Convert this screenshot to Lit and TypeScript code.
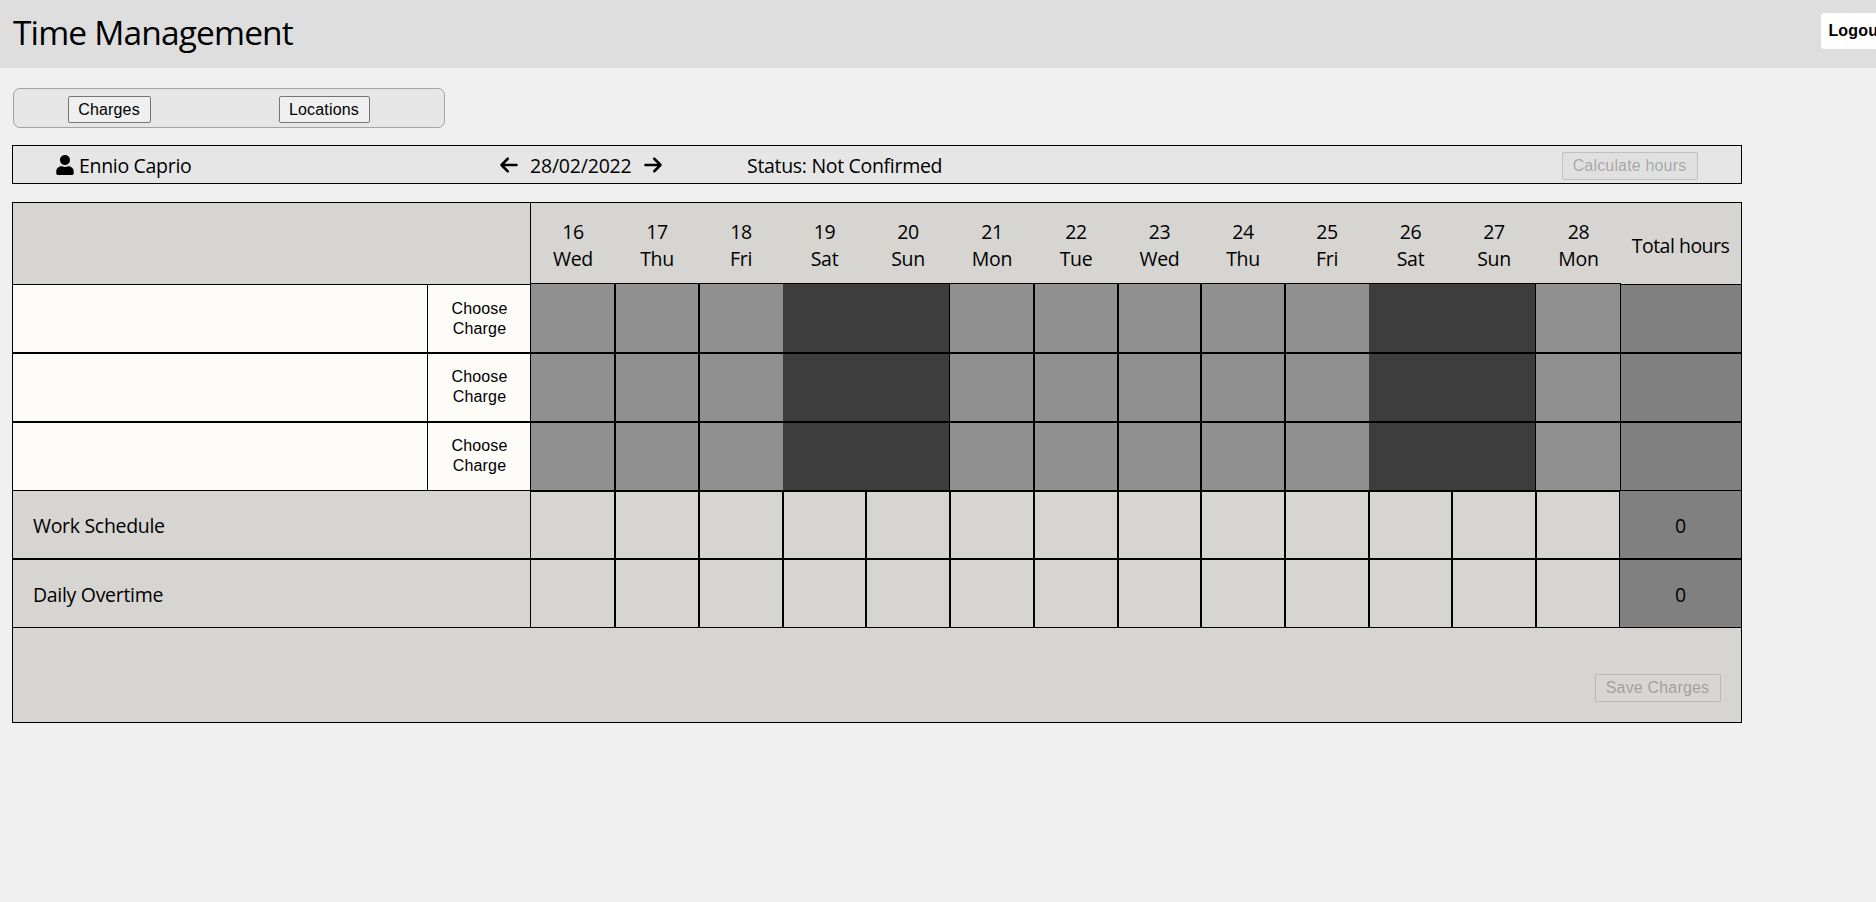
import { LitElement, html, css, svg } from "lit";
import { customElement } from "lit/decorators.js";
import { classMap } from "lit/directives/class-map.js";

const NAMES = ["Sun", "Mon", "Tue", "Wed", "Thu", "Fri", "Sat"];
const DAYS = Array.from({ length: 13 }, (_, i) => {
  const weekday = (i + 3) % 7;
  return { date: 16 + i, name: NAMES[weekday], weekday };
});

const userIcon = svg`<path d="M224 256c70.700 0 128-57.300 128-128S294.700 0 224 0 96 57.300 96 128s57.300 128 128 128zm89.600 32h-16.700c-22.200 10.200-46.900 16-72.900 16s-50.600-5.800-72.900-16h-16.700C60.200 288 0 348.200 0 422.400V464c0 26.500 21.500 48 48 48h352c26.500 0 48-21.500 48-48v-41.600c0-74.200-60.200-134.400-134.400-134.400z"/>`;
const leftIcon = svg`<path d="M9.400 233.400c-12.500 12.500-12.500 32.800 0 45.300l160 160c12.500 12.500 32.800 12.500 45.300 0s12.500-32.800 0-45.300L109.200 288 416 288c17.700 0 32-14.300 32-32s-14.300-32-32-32l-306.700 0L214.600 118.600c12.500-12.500 12.500-32.800 0-45.300s-32.800-12.500-45.300 0l-160 160z"/>`;

@customElement("app-root")
export class AppRoot extends LitElement {
  static styles = css`
    :host {
      display: block;
      height: 902px;
      overflow: hidden;
      background: #f0f0f0;
      color: #000;
      font: 400 19.5px/27px "Open Sans", "Noto Sans", sans-serif;
      letter-spacing: -0.31px;
    }
    * { box-sizing: border-box; }
    button {
      font: 16px/18px "Liberation Sans", Arial, sans-serif;
      letter-spacing: 0.17px;
      color: #000;
      background: #efefef;
      border: 1px solid #767676;
      border-radius: 2px;
      padding: 0 1px 0 0;
      height: 27px;
    }
    button:disabled {
      height: 28px;
      color: rgba(16, 16, 16, 0.3);
      border-color: rgba(118, 118, 118, 0.3);
    }
    .top {
      display: flex;
      justify-content: space-between;
      align-items: flex-start;
      height: 68px;
      padding-left: 13px;
      background: #dedede;
      overflow: hidden;
    }
    .title { margin: 0; font-size: 33.5px; line-height: 65px; font-weight: 400; letter-spacing: -0.85px; white-space: nowrap; }
    .logout {
      flex: none;
      width: 71px;
      height: 36px;
      margin: 13px -16px 0 0;
      border: 0;
      border-radius: 4px;
      background: #fff;
      font-weight: 700;
    }
    .nav {
      display: flex;
      align-items: flex-start;
      gap: 128px;
      width: 432px;
      height: 40px;
      margin: 20px 0 0 13px;
      padding: 7px 0 0 54px;
      background: #e6e6e6;
      border: 1px solid #a3a3a3;
      border-radius: 7px;
    }
    .charges { width: 83px; }
    .locations { width: 91px; }
    .info {
      display: grid;
      grid-template-columns: 444px 247px 1fr auto;
      align-items: center;
      width: 1730px;
      height: 39px;
      margin: 17px 0 0 12px;
      padding: 1px 43px 0;
      background: #e6e6e6;
      border: 1px solid #000;
    }
    .user, .period { display: flex; align-items: center; }
    .user { gap: 5px; }
    .period { gap: 12px; }
    .period span { letter-spacing: -0.2px; }
    .user span, .period span, .status { padding-top: 1px; }
    svg { width: 18px; height: 20px; flex: none; display: block; }
    .user svg { margin-bottom: 1px; }
    .period svg { margin-bottom: 1px; }
    .flip { transform: scaleX(-1); }
    .calc { width: 136px; margin-top: 1px; background: #e0e0e0; }
    .sheet {
      width: 1730px;
      margin: 18px 0 0 12px;
      background: #d6d5d1;
      border: 1px solid #000;
    }
    .row { display: flex; height: 69px; }
    .lead { width: 518px; flex: none; display: flex; border-right: 1px solid #000; }
    .days {
      width: 1090px;
      flex: none;
      display: grid;
      grid-template-columns: 84px 84px 84px 83px 84px 84px 84px 83px 84px 84px 83px 84px 1fr;
    }
    .total { flex: 1; display: flex; align-items: center; justify-content: center; background: #808080; }
    .head { height: 81px; }
    .head .days { border-bottom: 1px solid #000; }
    .head .total { background: none; padding: 3px 1px 0 0; letter-spacing: -0.5px; }
    .day { text-align: center; padding: 15px 0 0 0; }
    .charge .lead { background: #fdfcf8; }
    .charge .lead, .charge .total { border-top: 1px solid #000; }
    .charge .lead, .charge .total, .charge .cell { border-bottom: 1px solid #000; }
    .charge + .charge .cell { border-top: 1px solid #000; }
    .slot { width: 414px; }
    .choose { flex: 1; height: 100%; border: 0; border-left: 1px solid #000; border-radius: 0; background: none; line-height: 20px; padding: 0 19px 1px 20px; }
    .head + .charge .choose { padding: 1px 19px 0 20px; }
    .cell { border-left: 1px solid #000; border-right: 1px solid #000; }
    .cell:first-child { border-left: 0; }
    .charge .cell { background: #909090; }
    .charge .cell.weekend { background: #3d3d3d; border-left: 0; border-right: 0; }
    .charge .cell.sun { border-right: 1px solid #000; }
    .charge .cell.before { border-right: 0; }
    .charge .cell.after { border-left: 0; }
    .sum { height: 68px; }
    .sum .days { width: 1089px; }
    .sum .lead { align-items: center; padding: 2px 0 0 20px; }
    .sum .total { padding-top: 2px; }
    .sum .lead, .sum .total, .sum .cell { border-bottom: 1px solid #000; }
    .sum .cell { border-top: 1px solid #000; }
    .sum + .sum { height: 69px; }
    .sum + .sum .lead, .sum + .sum .total { border-top: 1px solid #000; }
    .foot { display: flex; justify-content: flex-end; height: 94px; padding: 46px 20px 0 0; }
    .save { width: 126px; background: #d7d6d4; }
  `;

  private icon(shape: unknown, cls = "") {
    return html`<svg class=${cls} viewBox="0 0 448 512" aria-hidden="true">${shape}</svg>`;
  }

  private cells() {
    return DAYS.map((d) => html`<div class=${classMap({
      cell: true,
      weekend: d.weekday === 0 || d.weekday === 6,
      sun: d.weekday === 0,
      before: d.weekday === 5,
      after: d.weekday === 1,
    })}></div>`);
  }

  render() {
    return html`
      <header class="top">
        <h1 class="title">Time Management</h1>
        <button class="logout">Logout</button>
      </header>
      <nav class="nav">
        <button class="charges">Charges</button>
        <button class="locations">Locations</button>
      </nav>
      <section class="info">
        <div class="user">${this.icon(userIcon)}<span>Ennio Caprio</span></div>
        <div class="period">${this.icon(leftIcon)}<span>28/02/2022</span>${this.icon(leftIcon, "flip")}</div>
        <div class="status">Status: Not Confirmed</div>
        <button class="calc" disabled>Calculate hours</button>
      </section>
      <main class="sheet">
        <div class="row head">
          <div class="lead"></div>
          <div class="days">${DAYS.map((d) => html`<div class="day">${d.date}<br />${d.name}</div>`)}</div>
          <div class="total">Total hours</div>
        </div>
        ${[0, 1, 2].map(() => html`
          <div class="row charge">
            <div class="lead"><div class="slot"></div><button class="choose">Choose Charge</button></div>
            <div class="days">${this.cells()}</div>
            <div class="total"></div>
          </div>`)}
        ${["Work Schedule", "Daily Overtime"].map((label) => html`
          <div class="row sum">
            <div class="lead">${label}</div>
            <div class="days">${this.cells()}</div>
            <div class="total">0</div>
          </div>`)}
        <div class="foot"><button class="save" disabled>Save Charges</button></div>
      </main>
    `;
  }
}
